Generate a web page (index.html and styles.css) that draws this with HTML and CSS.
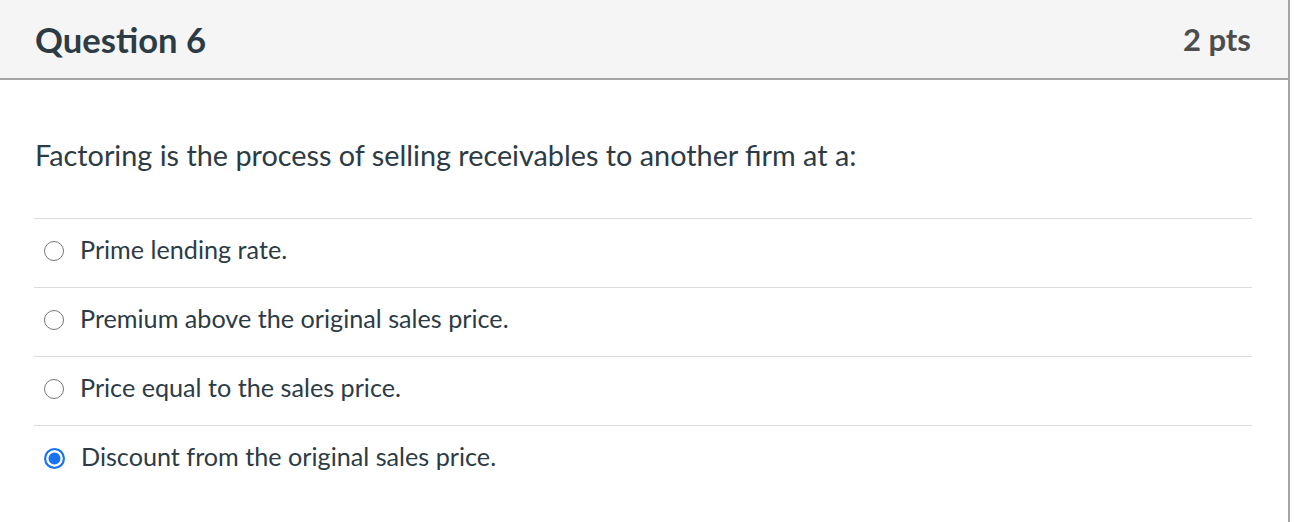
FILE: index.html
```html
<!DOCTYPE html>
<html lang="en">
<head>
<meta charset="utf-8">
<title>Question 6</title>
<link rel="stylesheet" href="styles.css">
</head>
<body>
<div class="question">
  <div class="question-header">
    <h2 class="question-title">Question 6</h2>
    <span class="points">2 pts</span>
  </div>
  <div class="question-body">
    <p class="question-text">Factoring is the process of selling receivables to another firm at a:</p>
    <div class="answers">
      <label class="answer"><span class="radio"></span><span class="answer-text">Prime lending rate.</span></label>
      <label class="answer"><span class="radio"></span><span class="answer-text">Premium above the original sales price.</span></label>
      <label class="answer"><span class="radio"></span><span class="answer-text">Price equal to the sales price.</span></label>
      <label class="answer"><span class="radio checked"></span><span class="answer-text">Discount from the original sales price.</span></label>
    </div>
  </div>
</div>
</body>
</html>
```
FILE: styles.css
```css
html, body {
  margin: 0;
  padding: 0;
  background: #ffffff;
}

body {
  font-family: Lato, "Open Sans", "Liberation Sans", sans-serif;
  color: #2d3b45;
}

.question {
  width: 1288px;
  height: 522px;
  border-right: 2px solid #a5a5a5;
  box-sizing: content-box;
}

.question-header {
  height: 78px;
  background: #f5f5f5;
  border-bottom: 2px solid #a5a5a5;
  display: flex;
  align-items: center;
  justify-content: space-between;
  padding: 0 37px 0 35px;
}

.question-title {
  margin: 0;
  font-size: 34.6px;
  font-weight: 700;
  color: #2d3b45;
}

.points {
  font-size: 31px;
  font-weight: 700;
  color: #4d4d4d;
}

.question-body {
  padding: 0 36px 0 34px;
}

.question-text {
  margin: 0;
  padding: 55px 0 0 1px;
  font-size: 28.8px;
  line-height: 40px;
}

.answers {
  margin-top: 43px;
}

.answer {
  display: flex;
  align-items: center;
  height: 68px;
  border-top: 1px solid #dddddd;
  padding-left: 10px;
}

.radio {
  width: 18px;
  height: 18px;
  border: 1.5px solid #767676;
  border-radius: 50%;
  box-sizing: content-box;
  margin-right: 16px;
  flex: none;
  position: relative;
  top: -2px;
}

.radio.checked {
  width: 17px;
  height: 17px;
  border: 2px solid #1a73f5;
  background: #1a73f5;
  box-shadow: inset 0 0 0 2.5px #ffffff;
}

.answer-text {
  font-size: 25.2px;
  line-height: 32px;
  position: relative;
  top: -4px;
}
```
